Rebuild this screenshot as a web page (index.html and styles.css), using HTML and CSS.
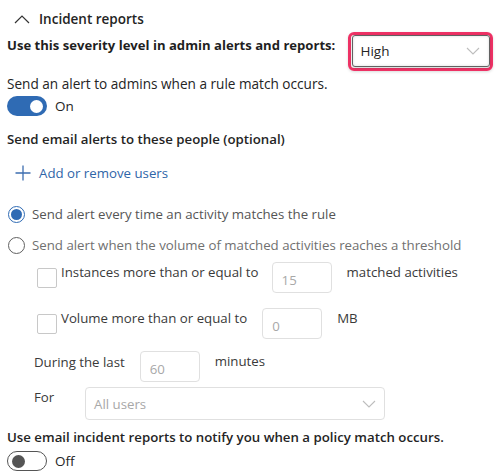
FILE: index.html
```html
<!DOCTYPE html>
<html>
<head>
<meta charset="utf-8">
<link rel="stylesheet" href="styles.css">
</head>
<body>
<div class="page">
  <div class="section-head">
    <svg class="chev-up" width="16" height="10" viewBox="0 0 16 10"><path d="M1 9 L8 2 L15 9" fill="none" stroke="#333" stroke-width="1.2"/></svg>
    <span class="section-title">Incident reports</span>
  </div>

  <div class="severity-row">
    <span class="label-bold">Use this severity level in admin alerts and reports:</span>
    <div class="highlight">
      <div class="select select-sev">
        <span>High</span>
        <svg class="chev-down" width="14" height="8" viewBox="0 0 14 8"><path d="M1 1 L7 7 L13 1" fill="none" stroke="#bdbdbd" stroke-width="1.1"/></svg>
      </div>
    </div>
  </div>

  <div class="row-alert">Send an alert to admins when a rule match occurs.</div>
  <div class="toggle-row">
    <span class="toggle on"><span class="knob"></span></span>
    <span class="toggle-text">On</span>
  </div>

  <div class="label-med row-email">Send email alerts to these people (optional)</div>
  <div class="add-users">
    <svg width="16" height="16" viewBox="0 0 16 16"><path d="M8 0.5 V15.5 M0.5 8 H15.5" stroke="#3d6eb0" stroke-width="1.3" fill="none"/></svg>
    <span>Add or remove users</span>
  </div>

  <div class="radio-row r1">
    <span class="radio checked"><span class="dot"></span></span>
    <span class="radio-text">Send alert every time an activity matches the rule</span>
  </div>
  <div class="radio-row r2">
    <span class="radio"></span>
    <span class="radio-text light">Send alert when the volume of matched activities reaches a threshold</span>
  </div>

  <div class="check-row c1">
    <span class="checkbox"></span>
    <span class="check-text">Instances more than or equal to</span>
    <span class="input w60 in1">15</span>
    <span class="unit">matched activities</span>
  </div>
  <div class="check-row c2">
    <span class="checkbox"></span>
    <span class="check-text">Volume more than or equal to</span>
    <span class="input w60 in2">0</span>
    <span class="unit">MB</span>
  </div>

  <div class="during-row">
    <span class="during-text">During the last</span>
    <span class="input w60 in3">60</span>
    <span class="unit">minutes</span>
  </div>

  <div class="for-row">
    <span class="for-text">For</span>
    <div class="select select-users">
      <span>All users</span>
      <svg class="chev-down" width="14" height="8" viewBox="0 0 14 8"><path d="M1 1 L7 7 L13 1" fill="none" stroke="#bdbdbd" stroke-width="1.1"/></svg>
    </div>
  </div>

  <div class="label-med row-report">Use email incident reports to notify you when a policy match occurs.</div>
  <div class="toggle-row off-row">
    <span class="toggle off"><span class="knob"></span></span>
    <span class="toggle-text">Off</span>
  </div>
</div>
</body>
</html>
```
FILE: styles.css
```css
html, body {
  margin: 0;
  padding: 0;
  background: #ffffff;
}
.page {
  font-family: "Open Sans", "Noto Sans", sans-serif;
  font-size: 13.25px;
  color: #242424;
  padding: 0 0 0 7px;
  width: 497px;
  box-sizing: border-box;
}
.section-head {
  display: flex;
  align-items: center;
  height: 26px;
  margin-top: 6px;
  padding-left: 7px;
}
.chev-up { margin-right: 9px; }
.section-title {
  font-weight: 600;
  font-size: 13.5px;
  color: #242424;
}
.severity-row {
  display: flex;
  align-items: center;
  justify-content: space-between;
  height: 40px;
  margin-top: -1px;
}
.label-bold {
  font-weight: 700;
  font-size: 13.1px;
  color: #1f1f1f;
  margin-top: -12px;
}
.highlight {
  border: 3.5px solid #ee3265;
  border-radius: 6px;
  padding: 0.5px;
  margin-right: 4px;
  box-shadow: 0 1px 3px rgba(0,0,0,0.15);
}
.select {
  display: flex;
  align-items: center;
  justify-content: space-between;
  box-sizing: border-box;
  background: #fff;
}
.select-sev {
  width: 138px;
  height: 32px;
  border: 1px solid #616161;
  border-radius: 3px;
  padding: 0 9px 0 8px;
  box-shadow: inset 0 0 3px rgba(0,0,0,0.15), 0 1px 3px rgba(0,0,0,0.2);
  font-size: 13.5px;
  color: #242424;
}
.label-med {
  font-weight: 600;
  color: #242424;
}
.row-alert {
  margin-top: 4px;
  height: 18px;
  line-height: 18px;
  font-size: 13.6px;
  color: #242424;
}
.toggle-row {
  display: flex;
  align-items: center;
  height: 20px;
  margin-top: 3px;
}
.toggle {
  display: inline-flex;
  align-items: center;
  box-sizing: border-box;
  width: 40px;
  height: 20px;
  border-radius: 10px;
}
.toggle.on {
  background: #2f6bb4;
  justify-content: flex-end;
  padding-right: 4px;
}
.toggle.on .knob {
  width: 13px;
  height: 13px;
  border-radius: 50%;
  background: #fff;
}
.toggle.off {
  border: 1px solid #555;
  padding-left: 4px;
}
.toggle.off .knob {
  width: 13px;
  height: 13px;
  border-radius: 50%;
  background: #555;
}
.toggle-text {
  margin-left: 8px;
  color: #242424;
  font-size: 13.5px;
}
.row-email {
  margin-top: 14px;
  height: 18px;
  line-height: 18px;
}
.add-users {
  display: flex;
  align-items: center;
  margin-top: 16px;
  padding-left: 8px;
  height: 18px;
  color: #2f65a8;
}
.add-users span { margin-left: 8px; }
.radio-row {
  display: flex;
  align-items: center;
  height: 18px;
}
.r1 { margin-top: 23px; }
.r2 { margin-top: 13px; }
.radio {
  box-sizing: border-box;
  width: 17px;
  height: 17px;
  border-radius: 50%;
  border: 1px solid #616161;
  display: inline-flex;
  align-items: center;
  justify-content: center;
  margin-left: 1px;
}
.radio.checked { border-color: #2f6bb4; }
.radio .dot {
  width: 11px;
  height: 11px;
  border-radius: 50%;
  background: #2f6bb4;
}
.radio-text {
  margin-left: 7px;
  color: #555;
}
.radio-text.light { color: #707070; }
.check-row {
  display: flex;
  align-items: flex-start;
  padding-left: 30px;
  height: 31px;
}
.c1 { margin-top: 8px; }
.c2 { margin-top: 15px; }
.checkbox {
  box-sizing: border-box;
  width: 20px;
  height: 20px;
  border: 1px solid #c8c8c8;
  border-radius: 2px;
  margin-top: 6px;
}
.check-text {
  margin-left: 4px;
  margin-top: 1px;
  color: #3a3a3a;
}
.input {
  box-sizing: border-box;
  height: 31px;
  border: 1px solid #e0e0e0;
  border-radius: 4px;
  color: #a8a8a8;
  padding: 8px 0 0 9px;
  line-height: 18px;
}
.w60 { width: 60px; }
.in1 { margin-left: 13px; }
.in2 { margin-left: 15px; }
.unit {
  margin-left: 15px;
  margin-top: 1px;
  color: #3a3a3a;
}
.during-row {
  display: flex;
  align-items: flex-start;
  padding-left: 27px;
  margin-top: 12px;
  height: 31px;
}
.during-text { margin-top: 2px; color: #3a3a3a; }
.in3 { margin-left: 15px; }
.for-row {
  display: flex;
  align-items: flex-start;
  padding-left: 27px;
  margin-top: 5px;
  height: 33px;
}
.for-text { margin-top: 1px; color: #3a3a3a; width: 51px; }
.select-users {
  width: 300px;
  height: 33px;
  border: 1px solid #e0e0e0;
  border-radius: 4px;
  padding: 0 8px 0 8px;
  color: #a8a8a8;
}
.row-report {
  margin-top: 8px;
  height: 18px;
  line-height: 18px;
}
.off-row { margin-top: 5px; }
```
